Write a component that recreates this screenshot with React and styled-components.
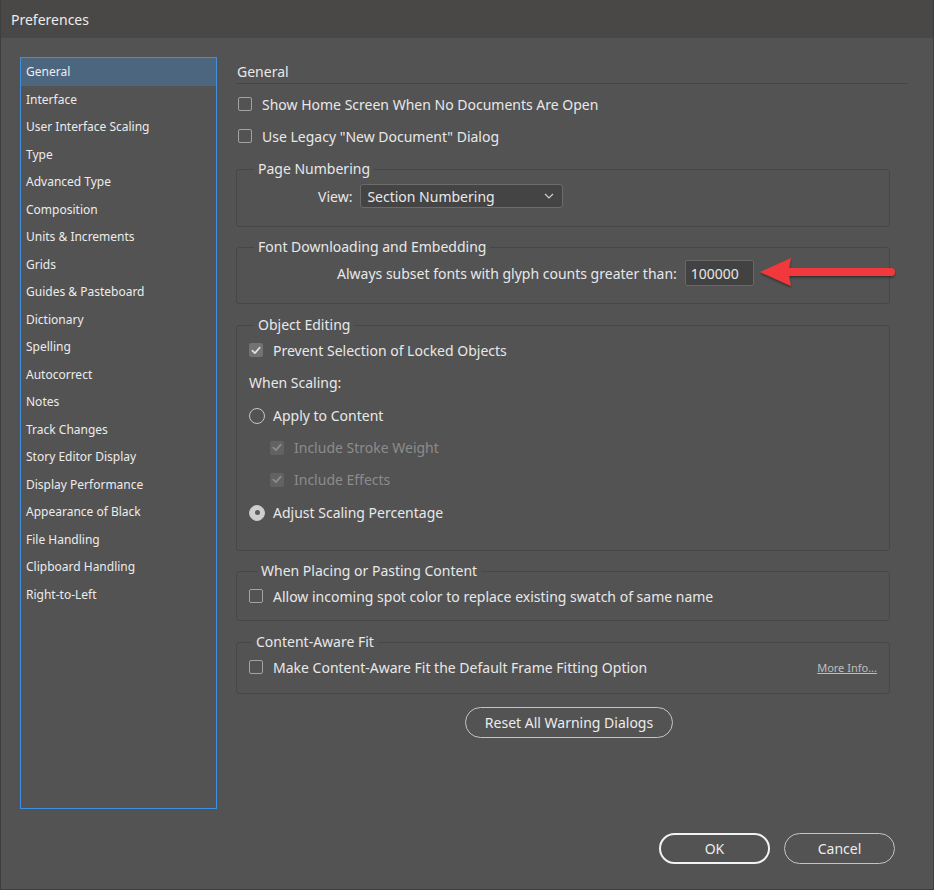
import React from 'react';
import styled, { createGlobalStyle } from 'styled-components';

const GlobalStyle = createGlobalStyle`
  html, body {
    margin: 0;
    padding: 0;
    background: #535353;
  }
  * {
    box-sizing: border-box;
  }
`;

const FONT = `"Noto Sans", "Open Sans", "DejaVu Sans", sans-serif`;

const Window = styled.div`
  width: 934px;
  height: 890px;
  display: flex;
  flex-direction: column;
  background: #535353;
  color: #e8e8e8;
  font-family: ${FONT};
  border: 1px solid #3e3e3e;
  border-top: none;
`;

const TitleBar = styled.div`
  height: 38px;
  display: flex;
  align-items: center;
  padding-left: 10px;
  background: #4a4847;
  font-size: 14px;
  color: #ececec;
`;

const Body = styled.div`
  display: grid;
  grid-template-columns: 197px 672px;
  gap: 19px;
  padding: 19px 0 0 19px;
`;

const Sidebar = styled.ul`
  list-style: none;
  margin: 0;
  padding: 0;
  height: 752px;
  border: 1px solid #3f8fe0;
`;

const NavItem = styled.li`
  height: 27.5px;
  display: flex;
  align-items: center;
  padding-left: 5px;
  font-size: 12px;
  color: #ececec;
  background: ${(p) => (p.$active ? '#4d6680' : 'transparent')};
`;

const Main = styled.div`
  display: flex;
  flex-direction: column;
  padding-top: 6px;
`;

const Heading = styled.div`
  font-size: 14px;
  line-height: 18px;
  padding-left: 1px;
  padding-bottom: 2px;
  border-bottom: 1px solid #464646;
`;

const Row = styled.label`
  display: flex;
  align-items: center;
  gap: ${(p) => (p.$gap ? p.$gap : 10)}px;
  height: ${(p) => (p.$h ? p.$h : 22)}px;
  margin-top: ${(p) => (p.$mt ? p.$mt : 0)}px;
  padding-left: ${(p) => (p.$indent ? p.$indent : 0)}px;
  font-size: 14px;
  color: ${(p) => (p.$disabled ? '#8c8c8c' : '#e8e8e8')};
  white-space: nowrap;
`;

const Box = styled.span`
  width: 14px;
  height: 14px;
  flex: none;
  border-radius: 2px;
  display: flex;
  align-items: center;
  justify-content: center;
  border: 1px solid ${(p) => (p.$checked ? 'transparent' : '#a3a3a3')};
  background: ${(p) =>
    p.$checked ? (p.$disabled ? '#626262' : '#727272') : 'transparent'};
`;

const Radio = styled.span`
  width: 16px;
  height: 16px;
  flex: none;
  border-radius: 50%;
  display: flex;
  align-items: center;
  justify-content: center;
  border: 1px solid #c6c6c6;
  background: ${(p) => (p.$checked ? '#cfcfcf' : 'transparent')};

  &::after {
    content: '';
    display: ${(p) => (p.$checked ? 'block' : 'none')};
    width: 5px;
    height: 5px;
    border-radius: 50%;
    background: #5a5a5a;
  }
`;

const Group = styled.fieldset`
  width: 654px;
  margin: ${(p) => p.$mt}px 0 0 0;
  padding: ${(p) => p.$pt}px 12px ${(p) => p.$pb}px 12px;
  border: 1px solid #474747;
  border-radius: 3px;
  min-width: 0;
`;

const Legend = styled.legend`
  font-size: 14px;
  line-height: 18px;
  padding: 0 4px;
  margin-left: ${(p) => (p.$ml ? p.$ml : 5)}px;
  color: #e8e8e8;
`;

const FieldRow = styled.div`
  display: flex;
  align-items: center;
  gap: ${(p) => (p.$gap ? p.$gap : 8)}px;
  padding-left: ${(p) => (p.$indent ? p.$indent : 0)}px;
  font-size: 14px;
  position: relative;
`;

const Select = styled.div`
  width: 203px;
  height: 24px;
  display: flex;
  align-items: center;
  justify-content: space-between;
  padding: 0 8px 0 6px;
  background: #444444;
  border: 1px solid #6b6b6b;
  border-radius: 3px;
  font-size: 14px;
`;

const NumberInput = styled.div`
  width: 69px;
  height: 26px;
  display: flex;
  align-items: center;
  padding-left: 5px;
  background: #424242;
  border: 1px solid #676767;
  border-radius: 2px;
  font-size: 14px;
`;

const Annotation = styled.svg`
  position: absolute;
  left: 511px;
  top: -4px;
  overflow: visible;
`;

const LinkText = styled.span`
  margin-left: auto;
  margin-right: 0;
  font-size: 11px;
  color: #bdbdbd;
  text-decoration: underline;
`;

const PillButton = styled.button`
  width: ${(p) => p.$w}px;
  height: 31px;
  border-radius: 16px;
  background: transparent;
  border: ${(p) => (p.$primary ? '2px solid #f2f2f2' : '1px solid #c4c4c4')};
  color: #ececec;
  font-family: ${FONT};
  font-size: 14px;
  padding: 0;
`;

const ResetWrap = styled.div`
  margin-top: 13px;
  padding-left: 229px;
`;

const Footer = styled.div`
  display: flex;
  justify-content: flex-end;
  gap: 14px;
  padding: 24px 38px 0 0;
`;

const Check = ({ disabled }) => (
  <svg width="10" height="9" viewBox="0 0 10 9">
    <path
      d="M1.3 4.6 L3.9 7.1 L8.7 1.6"
      fill="none"
      stroke={disabled ? '#8e8e8e' : '#e2e2e2'}
      strokeWidth="1.6"
      strokeLinecap="round"
      strokeLinejoin="round"
    />
  </svg>
);

const Checkbox = ({ checked, disabled }) => (
  <Box $checked={checked} $disabled={disabled}>
    {checked && <Check disabled={disabled} />}
  </Box>
);

const Chevron = () => (
  <svg width="10" height="6" viewBox="0 0 10 6">
    <path d="M1 1 L5 5 L9 1" fill="none" stroke="#cfcfcf" strokeWidth="1.2" />
  </svg>
);

const RedArrow = () => (
  <svg width="140" height="34" viewBox="0 0 140 34">
    <defs>
      <filter id="arrowShadow" x="-10%" y="-30%" width="120%" height="160%">
        <feDropShadow dx="0" dy="1.5" stdDeviation="1.2" floodColor="#000" floodOpacity="0.45" />
      </filter>
    </defs>
    <g filter="url(#arrowShadow)" fill="#f0393d">
      <path d="M0 16 L31 2 L29 12 L131 12 A4 4 0 0 1 131 20 L29 20 L31 30 Z" />
    </g>
  </svg>
);

const navItems = [
  'General',
  'Interface',
  'User Interface Scaling',
  'Type',
  'Advanced Type',
  'Composition',
  'Units & Increments',
  'Grids',
  'Guides & Pasteboard',
  'Dictionary',
  'Spelling',
  'Autocorrect',
  'Notes',
  'Track Changes',
  'Story Editor Display',
  'Display Performance',
  'Appearance of Black',
  'File Handling',
  'Clipboard Handling',
  'Right-to-Left',
];

export default function App() {
  return (
    <>
      <GlobalStyle />
      <Window>
        <TitleBar>Preferences</TitleBar>
        <Body>
          <Sidebar>
            {navItems.map((item, i) => (
              <NavItem key={item} $active={i === 0}>
                {item}
              </NavItem>
            ))}
          </Sidebar>

          <Main>
            <Heading>General</Heading>
            <Row $mt={9} $indent={2}>
              <Checkbox />
              Show Home Screen When No Documents Are Open
            </Row>
            <Row $mt={10} $indent={2}>
              <Checkbox />
              Use Legacy "New Document" Dialog
            </Row>

            <Group $mt={13} $pt={6} $pb={18}>
              <Legend>Page Numbering</Legend>
              <FieldRow $indent={69} $gap={8}>
                View:
                <Select>
                  Section Numbering
                  <Chevron />
                </Select>
              </FieldRow>
            </Group>

            <Group $mt={11} $pt={4} $pb={17}>
              <Legend>Font Downloading and Embedding</Legend>
              <FieldRow $indent={88} $gap={8}>
                Always subset fonts with glyph counts greater than:
                <NumberInput>100000</NumberInput>
                <Annotation width="140" height="34">
                  <RedArrow />
                </Annotation>
              </FieldRow>
            </Group>

            <Group $mt={12} $pt={0} $pb={21}>
              <Legend>Object Editing</Legend>
              <Row $h={32}>
                <Checkbox checked />
                Prevent Selection of Locked Objects
              </Row>
              <Row $h={33}>When Scaling:</Row>
              <Row $h={33} $gap={8}>
                <Radio />
                Apply to Content
              </Row>
              <Row $h={31} $indent={21} $disabled>
                <Checkbox checked disabled />
                Include Stroke Weight
              </Row>
              <Row $h={33} $indent={21} $disabled>
                <Checkbox checked disabled />
                Include Effects
              </Row>
              <Row $h={33} $gap={8}>
                <Radio $checked />
                Adjust Scaling Percentage
              </Row>
            </Group>

            <Group $mt={11} $pt={5} $pb={13}>
              <Legend $ml={8}>When Placing or Pasting Content</Legend>
              <Row>
                <Checkbox />
                Allow incoming spot color to replace existing swatch of same name
              </Row>
            </Group>

            <Group $mt={12} $pt={5} $pb={15}>
              <Legend $ml={3}>Content-Aware Fit</Legend>
              <Row>
                <Checkbox />
                Make Content-Aware Fit the Default Frame Fitting Option
                <LinkText>More Info...</LinkText>
              </Row>
            </Group>

            <ResetWrap>
              <PillButton $w={208}>Reset All Warning Dialogs</PillButton>
            </ResetWrap>
          </Main>
        </Body>

        <Footer>
          <PillButton $w={111} $primary>
            OK
          </PillButton>
          <PillButton $w={111}>Cancel</PillButton>
        </Footer>
      </Window>
    </>
  );
}
